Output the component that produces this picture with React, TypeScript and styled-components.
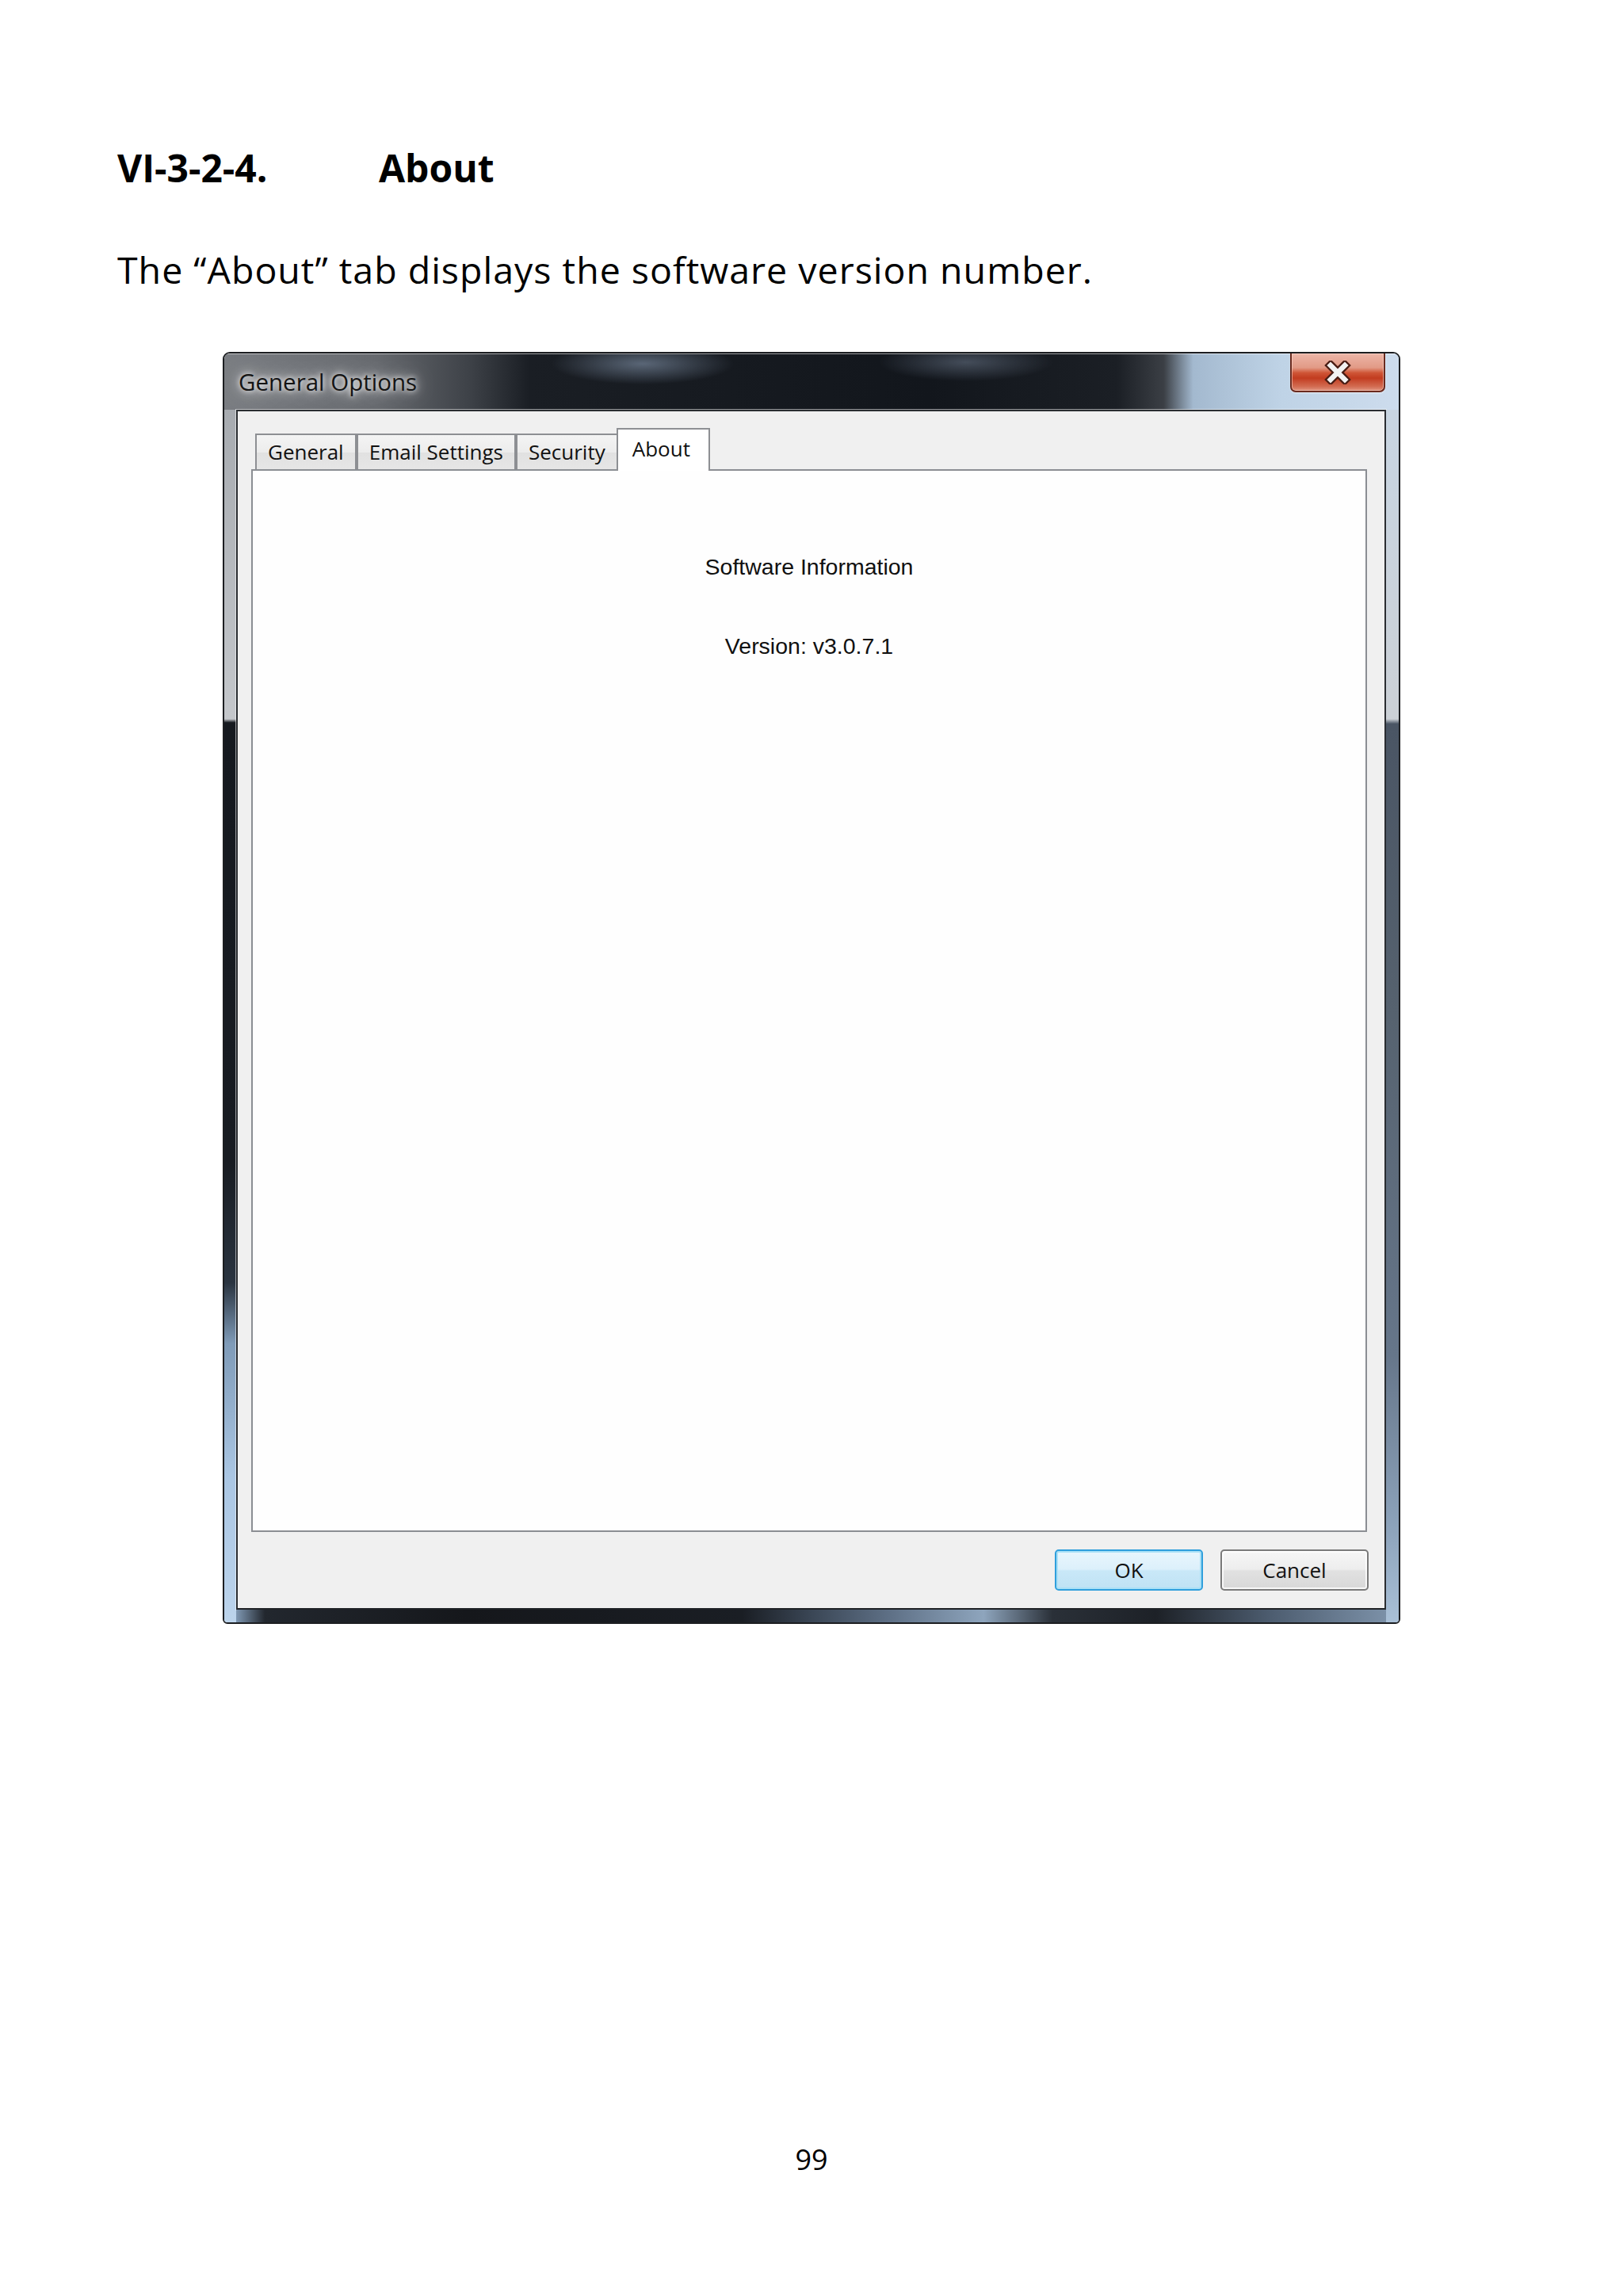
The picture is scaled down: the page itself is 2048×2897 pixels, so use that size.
import React from 'react';
import styled, {createGlobalStyle} from 'styled-components';

const GlobalStyle = createGlobalStyle`
    html, body {
        margin: 0;
        padding: 0;
        background: #ffffff;
    }
`;

const Page = styled.div`
    width: 2048px;
    min-height: 2897px;
    box-sizing: border-box;
    padding: 184px 0 0 148px;
    font-family: "Open Sans", "Noto Sans", sans-serif;
    color: #000000;
`;

const Heading = styled.h1`
    display: flex;
    margin: 0;
    font-size: 48px;
    line-height: 56px;
    font-weight: 700;
`;

const SectionNumber = styled.span`
    width: 330px;
`;

const Paragraph = styled.p`
    margin: 75px 0 0;
    font-size: 46.5px;
    line-height: 50px;
    letter-spacing: 1px;
`;

const PageNumber = styled.div`
    margin: 653px 0 0 -148px;
    text-align: center;
    font-size: 36px;
    line-height: 46px;
`;

// --- dialog window (Windows 7 aero look) ---

const Window = styled.div`
    width: 1486px;
    height: 1605px;
    margin: 79px 0 0 133px;
    box-sizing: border-box;
    border: 2px solid #1c1e21;
    border-radius: 9px 9px 6px 6px;
    overflow: hidden;
    display: grid;
    grid-template-columns: 15px 1fr 16px;
    grid-template-rows: 71px 1fr 16px;
    box-shadow: inset 0 0 0 1px rgba(255, 255, 255, 0.5);
`;

const TitleBar = styled.div`
    grid-column: 1 / 4;
    grid-row: 1;
    display: flex;
    align-items: flex-start;
    justify-content: space-between;
    padding: 0 17px 0 18px;
    border-top: 1px solid rgba(255, 255, 255, 0.55);
    background:
        radial-gradient(ellipse 115px 26px at 528px 12px, rgba(112, 127, 147, 0.75), rgba(112, 127, 147, 0) 100%),
        radial-gradient(ellipse 110px 24px at 936px 10px, rgba(100, 112, 130, 0.6), rgba(100, 112, 130, 0) 100%),
        linear-gradient(to right,
            #7a7d82 0%,
            #66696e 13%,
            #3d4147 21%,
            #1a1e24 26%,
            #12161c 60%,
            #1b1f25 76%,
            #3b3f45 80%,
            #a3b9cf 82.5%,
            #bfd3e6 90%,
            #cddced 100%);
`;

const TitleText = styled.div`
    padding-top: 17px;
    font-family: "Open Sans", "Noto Sans", sans-serif;
    font-size: 29.5px;
    line-height: 36px;
    color: #141414;
    text-shadow:
        0 0 6px rgba(255, 255, 255, 1),
        0 0 14px rgba(255, 255, 255, 0.9),
        0 0 26px rgba(255, 255, 255, 0.7);
`;

const CloseButton = styled.div`
    width: 120px;
    height: 49px;
    margin-top: -1px;
    box-sizing: border-box;
    display: flex;
    align-items: center;
    justify-content: center;
    border: 2px solid #6a2a1e;
    border-top: none;
    border-radius: 0 0 7px 7px;
    background: linear-gradient(to bottom,
        #ecb6a8 0%,
        #e29a86 38%,
        #cf5536 52%,
        #c23c20 66%,
        #d26a50 88%,
        #e09580 100%);
    box-shadow: inset 0 0 0 1px rgba(255, 220, 210, 0.55), 0 1px 2px rgba(255, 255, 255, 0.6);
`;

const FrameSide = styled.div<{$side: 'left' | 'right'}>`
    grid-column: ${(p) => (p.$side === 'left' ? 1 : 3)};
    grid-row: 2 / 4;
    background: ${(p) => (p.$side === 'left'
        ? `linear-gradient(to bottom,
            #a7abb0 0%,
            #c4c7cb 25.5%,
            #15191f 25.8%,
            #181c22 62%,
            #2a3440 72%,
            #7f9bb8 77%,
            #aac6e3 88%,
            #bcd4ec 100%)`
        : `linear-gradient(to bottom,
            #c8d5e2 0%,
            #cbd0d6 25.5%,
            #4a5564 25.9%,
            #56626f 50%,
            #66768a 78%,
            #8ca2ba 92%,
            #a9c0d7 100%)`)};
`;

const FrameBottom = styled.div`
    grid-column: 2;
    grid-row: 3;
    background: linear-gradient(to right,
        #7f98b3 0%,
        #22272e 2.5%,
        #15171b 20%,
        #1a1e24 44%,
        #3a4655 50%,
        #5f7187 57%,
        #8ea5bd 65%,
        #2a3038 71%,
        #1d2127 80%,
        #4d5d70 90%,
        #7b90a7 100%);
`;

const Client = styled.div`
    grid-column: 2;
    grid-row: 2;
    display: flex;
    flex-direction: column;
    padding: 21px 22px 22px 17px;
    background: #f0f0f0;
    border: 2px solid #2a2d31;
    border-bottom-color: #1f2226;
    box-shadow: 0 0 0 1px rgba(255, 255, 255, 0.55);
    min-height: 0;
`;

const TabStrip = styled.div`
    display: flex;
    align-items: flex-end;
    padding-left: 5px;
    margin-bottom: -2px;
    position: relative;
    z-index: 1;
`;

const Tab = styled.div<{$active?: boolean}>`
    box-sizing: border-box;
    font-family: "Open Sans", "Noto Sans", sans-serif;
    font-size: 26px;
    line-height: 43px;
    color: #111111;
    white-space: nowrap;
    border: 2px solid #8d8f93;
    border-bottom: none;
    ${(p) => (p.$active
        ? `
        padding: 3px 23px 6px 18px;
        margin: 0 -2px;
        background: #ffffff;
        position: relative;
        z-index: 2;
    `
        : `
        padding: 0 14px;
        margin-bottom: 2px;
        background: linear-gradient(to bottom, #f4f4f4 0%, #ececec 50%, #e1e1e1 51%, #e6e6e6 100%);
    `)}
`;

const Panel = styled.div`
    flex: 1;
    display: flex;
    flex-direction: column;
    align-items: center;
    padding-top: 105px;
    background: #fefefe;
    border: 2px solid #8b8e93;
    font-family: "Liberation Sans", Arial, sans-serif;
    font-size: 28.5px;
    line-height: 32px;
    color: #101010;
`;

const InfoLine = styled.div`
    & + & {
        margin-top: 68px;
    }
`;

const ButtonRow = styled.div`
    display: flex;
    justify-content: flex-end;
    gap: 22px;
    margin: 22px -2px 0 0;
`;

const Button = styled.div<{$default?: boolean}>`
    width: 187px;
    height: 52px;
    box-sizing: border-box;
    display: flex;
    align-items: center;
    justify-content: center;
    font-family: "Open Sans", "Noto Sans", sans-serif;
    font-size: 26px;
    color: #111111;
    border-radius: 5px;
    ${(p) => (p.$default
        ? `
        border: 2px solid #2f9fdc;
        background: linear-gradient(to bottom, #e9f6fd 0%, #dcf0fb 48%, #c9e8f8 52%, #bfe2f4 100%);
        box-shadow: inset 0 0 0 2px #a9e0f6;
    `
        : `
        border: 2px solid #7a7a7a;
        background: linear-gradient(to bottom, #f6f6f6 0%, #ededed 48%, #e1e1e1 52%, #d8d8d8 100%);
        box-shadow: inset 0 0 0 2px rgba(255, 255, 255, 0.8);
    `)}
`;

const CloseGlyph = () => (
    <svg width="34" height="30" viewBox="0 0 34 30">
        <path d="M8 6 L26 24 M26 6 L8 24" stroke="#4a1d14" strokeWidth="11" strokeLinecap="square" />
        <path d="M8 6 L26 24 M26 6 L8 24" stroke="#f2f2f2" strokeWidth="6.5" strokeLinecap="square" />
    </svg>
);

const tabs = ['General', 'Email Settings', 'Security', 'About'];

const App = () => {
    return (
        <Page>
            <GlobalStyle />
            <Heading>
                <SectionNumber>VI-3-2-4.</SectionNumber>
                <span>About</span>
            </Heading>
            <Paragraph>The “About” tab displays the software version number.</Paragraph>

            <Window>
                <TitleBar>
                    <TitleText>General Options</TitleText>
                    <CloseButton>
                        <CloseGlyph />
                    </CloseButton>
                </TitleBar>
                <FrameSide $side="left" />
                <Client>
                    <TabStrip>
                        {tabs.map((t) => (
                            <Tab key={t} $active={t === 'About'}>{t}</Tab>
                        ))}
                    </TabStrip>
                    <Panel>
                        <InfoLine>Software Information</InfoLine>
                        <InfoLine>Version: v3.0.7.1</InfoLine>
                    </Panel>
                    <ButtonRow>
                        <Button $default>OK</Button>
                        <Button>Cancel</Button>
                    </ButtonRow>
                </Client>
                <FrameSide $side="right" />
                <FrameBottom />
            </Window>

            <PageNumber>99</PageNumber>
        </Page>
    );
};

export default App;
